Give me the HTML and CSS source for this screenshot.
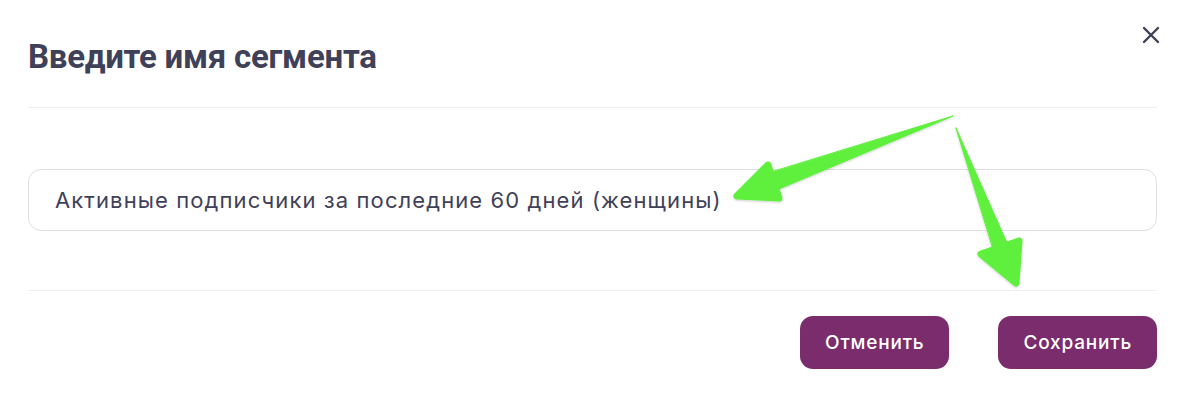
FILE: index.html
```html
<!DOCTYPE html>
<html lang="ru">
<head>
    <meta charset="UTF-8">
    <title>Сегмент</title>
    <link rel="stylesheet" href="styles.css">
</head>
<body>
<div class="modal">
    <div class="modal-head">
        <h2 class="modal-title">Введите имя сегмента</h2>
        <a href="javascript:;" class="modal-close" aria-label="Закрыть">
            <svg width="18" height="18" viewBox="0 0 18 18">
                <path d="M2 2 L16 16 M16 2 L2 16" stroke="#3f4159" stroke-width="2.4" stroke-linecap="round"/>
            </svg>
        </a>
    </div>
    <div class="modal-body">
        <input class="field" type="text" value="Активные подписчики за последние 60 дней (женщины)">
    </div>
    <div class="modal-foot">
        <a href="javascript:;" class="btn">Отменить</a>
        <a href="javascript:;" class="btn">Сохранить</a>
    </div>

    <svg class="arrows" width="1184" height="418" viewBox="0 0 1184 418">
        <defs>
            <filter id="sh" x="-20%" y="-20%" width="140%" height="140%">
                <feDropShadow dx="0" dy="1" stdDeviation="1" flood-color="#000" flood-opacity="0.2"/>
            </filter>
        </defs>
        <g fill="#5ff03c" stroke="#5ff03c" stroke-linejoin="round" stroke-linecap="round" filter="url(#sh)">
            <path d="M953 116 L779 189 L769 173 Z" stroke-width="1"/>
            <path d="M768 165 L737 196 L779 198 Z" stroke-width="7"/>
            <path d="M956 128 L1007 243 L993 248 Z" stroke-width="1"/>
            <path d="M981 254 L1016 283 L1019 241 Z" stroke-width="7"/>
        </g>
    </svg>
</div>
</body>
</html>
```

FILE: styles.css
```css
html, body {
    margin: 0;
    padding: 0;
    background: #fff;
}

.modal {
    position: relative;
    width: 1184px;
    height: 418px;
    padding: 0 27px 0 28px;
    box-sizing: border-box;
    font-family: Inter, "Noto Sans", sans-serif;
    color: #3f4159;
}

.modal-head {
    display: flex;
    justify-content: space-between;
    align-items: flex-start;
    height: 108px;
    border-bottom: 1px solid #eeeef1;
    box-sizing: border-box;
}

.modal-title {
    margin: 33px 0 0;
    font-family: Roboto, "Noto Sans", sans-serif;
    font-size: 33px;
    font-weight: 700;
    letter-spacing: -0.25px;
    line-height: 48px;
}

.modal-close {
    margin: 26px -3px 0 0;
    display: block;
    line-height: 0;
}

.modal-body {
    height: 183px;
    padding-top: 61px;
    border-bottom: 1px solid #eeeef1;
    box-sizing: border-box;
}

.field {
    display: block;
    width: 100%;
    height: 62px;
    box-sizing: border-box;
    border: 1px solid #dfdfe3;
    border-radius: 13px;
    padding: 0 26px;
    font-family: inherit;
    font-size: 22px;
    letter-spacing: 1.1px;
    color: #3f4159;
    outline: none;
}

.modal-foot {
    display: flex;
    justify-content: flex-end;
    gap: 49px;
    padding-top: 25px;
}

.btn {
    display: flex;
    align-items: center;
    height: 53px;
    padding: 0 25px;
    background: #7b2c6d;
    color: #fff;
    border-radius: 13px;
    font-size: 19px;
    font-weight: 500;
    letter-spacing: 0.8px;
    text-decoration: none;
}

.arrows {
    position: absolute;
    left: 0;
    top: 0;
    pointer-events: none;
}
```
